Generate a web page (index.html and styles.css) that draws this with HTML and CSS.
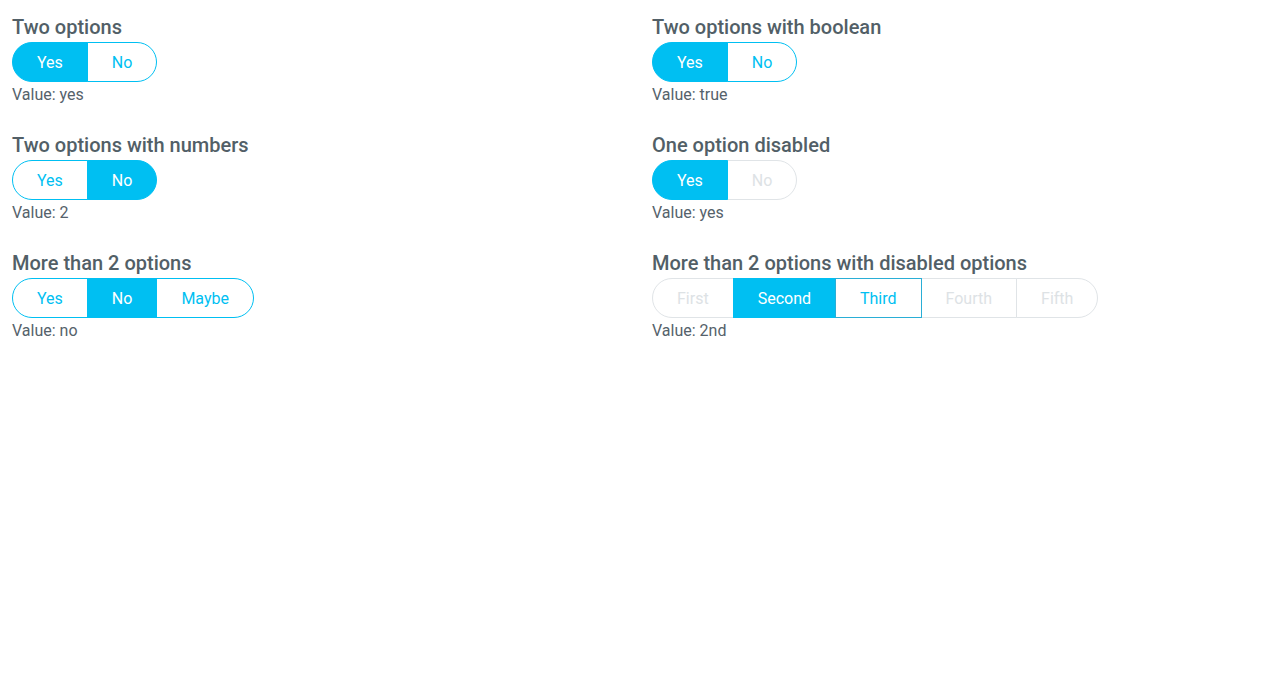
FILE: index.html
```html
<!DOCTYPE html>
<html lang="en">
<head>
<meta charset="utf-8">
<title>Toggle groups</title>
<link rel="stylesheet" href="styles.css">
</head>
<body>
<div class="grid">
  <section class="demo">
    <h2 class="title">Two options</h2>
    <div class="group">
      <button class="opt on">Yes</button><button class="opt">No</button>
    </div>
    <p class="value">Value: yes</p>
  </section>
  <section class="demo">
    <h2 class="title">Two options with boolean</h2>
    <div class="group">
      <button class="opt on">Yes</button><button class="opt">No</button>
    </div>
    <p class="value">Value: true</p>
  </section>
  <section class="demo">
    <h2 class="title">Two options with numbers</h2>
    <div class="group">
      <button class="opt">Yes</button><button class="opt on">No</button>
    </div>
    <p class="value">Value: 2</p>
  </section>
  <section class="demo">
    <h2 class="title">One option disabled</h2>
    <div class="group">
      <button class="opt on">Yes</button><button class="opt off">No</button>
    </div>
    <p class="value">Value: yes</p>
  </section>
  <section class="demo">
    <h2 class="title">More than 2 options</h2>
    <div class="group">
      <button class="opt">Yes</button><button class="opt on">No</button><button class="opt">Maybe</button>
    </div>
    <p class="value">Value: no</p>
  </section>
  <section class="demo">
    <h2 class="title">More than 2 options with disabled options</h2>
    <div class="group">
      <button class="opt off">First</button><button class="opt on">Second</button><button class="opt focus">Third</button><button class="opt off">Fourth</button><button class="opt off">Fifth</button>
    </div>
    <p class="value">Value: 2nd</p>
  </section>
</div>
</body>
</html>
```
FILE: styles.css
```css
* { box-sizing: border-box; }
html, body { margin: 0; background: #ffffff; }
body {
  font-family: Roboto, "Noto Sans", "Liberation Sans", sans-serif;
  color: #55626b;
  padding: 15px 0 0;
}
.grid {
  display: grid;
  grid-template-columns: 1fr 1fr;
  row-gap: 28px;
}
.demo {
  display: flex;
  flex-direction: column;
  align-items: flex-start;
  padding-left: 12px;
}
.title {
  margin: 0 0 3px;
  font-size: 20px;
  line-height: 24px;
  font-weight: 500;
  color: #525f67;
}
.group { display: inline-flex; }
.opt {
  position: relative;
  margin: 0 0 0 -1px;
  height: 40px;
  padding: 1px 24px 0;
  border: 1px solid #00bff2;
  background: #ffffff;
  color: #00bff2;
  font-family: inherit;
  font-size: 16px;
  line-height: 37px;
  cursor: pointer;
}
.opt:first-child { margin-left: 0; border-radius: 20px 0 0 20px; }
.opt:last-child { border-radius: 0 20px 20px 0; }
.opt.on { background: #00bff2; color: #ffffff; z-index: 1; }
.opt.off { border-color: #e0e4e7; color: #dde2e5; cursor: default; }
.opt.focus { z-index: 2; border-color: #2aaed6; }
.value {
  margin: 3px 0 0;
  font-size: 16px;
  line-height: 20px;
  color: #55626b;
}
```
